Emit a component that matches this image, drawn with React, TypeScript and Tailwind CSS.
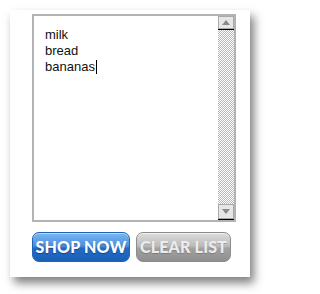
export default function App() {
  return (
    <div className="min-h-[294px] w-[268px] bg-white pl-[10px] pt-[10px]">
      <div className="flex h-[267px] w-[240px] flex-col bg-white pl-[22px] pt-[4px] shadow-[4px_6px_9px_rgba(0,0,0,0.5)]">
        <div className="flex h-[208px] w-[204px] border-2 border-[#b3b3b3] bg-white">
          <div
            className="flex-1 pl-[11px] pt-[11px] text-[13px] leading-[16px] text-[#111]"
            style={{ fontFamily: '"Liberation Sans", Arial, sans-serif' }}
          >
            <div>milk</div>
            <div>bread</div>
            <div className="flex items-center">
              bananas
              <span className="ml-[1px] inline-block h-[14px] w-[1px] bg-black" />
            </div>
          </div>
          <div className="flex w-[16px] flex-col">
            <div className="flex h-[13px] items-center justify-center border border-[#a9a9a9] bg-[#e6e6e6]">
              <svg width="8" height="5" viewBox="0 0 8 5">
                <polygon points="0,5 8,5 4,0" fill="#8a8a8a" />
              </svg>
            </div>
            <div className="h-[1px] bg-black" />
            <div className="flex-1 bg-[repeating-conic-gradient(#b8b8b8_0_25%,#ffffff_0_50%)] bg-[length:2px_2px]" />
            <div className="flex h-[15px] items-center justify-center border border-[#a9a9a9] bg-[#e6e6e6]">
              <svg width="8" height="5" viewBox="0 0 8 5">
                <polygon points="0,0 8,0 4,5" fill="#8a8a8a" />
              </svg>
            </div>
            <div className="h-[1px] bg-black" />
          </div>
        </div>
        <div
          className="mt-[10px] flex gap-[6px]"
          style={{ fontFamily: 'Lato, "Open Sans", sans-serif' }}
        >
          <button className="flex h-[30px] w-[98px] items-center justify-center rounded-[7px] border border-[#2063b5] bg-[linear-gradient(#7ab6f2_0%,#4a92e0_45%,#1f6cc8_55%,#1b5fb6_100%)] text-[16px] font-black tracking-[0.2px] text-white shadow-[inset_0_1px_0_rgba(255,255,255,0.5)] [text-shadow:0_1px_1px_rgba(0,0,0,0.35)]">
            SHOP NOW
          </button>
          <button className="flex h-[30px] w-[95px] items-center justify-center rounded-[7px] border border-[#8c8c8c] bg-[linear-gradient(#dcdcdc_0%,#bdbdbd_45%,#a2a2a2_55%,#8e8e8e_100%)] text-[16px] font-black tracking-[0.2px] text-[#ececec] shadow-[inset_0_1px_0_rgba(255,255,255,0.6)] [text-shadow:0_1px_1px_rgba(0,0,0,0.2)]">
            CLEAR LIST
          </button>
        </div>
      </div>
    </div>
  );
}
